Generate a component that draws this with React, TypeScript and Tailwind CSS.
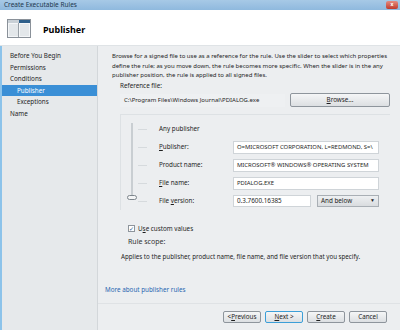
import React from "react";

const navItems = [
  { label: "Before You Begin", indent: false, active: false },
  { label: "Permissions", indent: false, active: false },
  { label: "Conditions", indent: false, active: false },
  { label: "Publisher", indent: true, active: true },
  { label: "Exceptions", indent: true, active: false },
  { label: "Name", indent: false, active: false },
];

const HeaderIcon = () => (
  <svg width="24" height="19" viewBox="0 0 24 19">
    <rect x="0.5" y="0.5" width="23" height="18" fill="#f4f6f8" stroke="#8a9199" />
    <rect x="1" y="1" width="22" height="3" fill="#c9d0d6" />
    <rect x="12" y="1" width="11" height="3" fill="#2e5f8a" />
    <line x1="11.5" y1="4" x2="11.5" y2="18" stroke="#9aa1a8" />
    <rect x="2" y="5" width="9" height="12" fill="#e3e7ea" />
    <rect x="13" y="5" width="9" height="12" fill="#e3e7ea" />
  </svg>
);

const Field = ({ u, rest, value }: { u: string; rest: string; value: string }) => (
  <div className="flex items-center h-[18px]">
    <div className="w-[9px] h-px bg-[#d6dadd] ml-[17px] mr-[12px]" />
    <span className="w-[74px]">
      <span className="underline">{u}</span>
      {rest}
    </span>
    <div className="w-[146px] h-[13px] bg-white border border-[#cfd4d8] px-[3px] flex items-center whitespace-nowrap overflow-hidden text-[5.9px]">
      {value}
    </div>
  </div>
);

const Btn = ({ u, pre, rest, primary }: { u: string; pre?: string; rest: string; primary?: boolean }) => (
  <div
    className={`w-[38px] h-[12px] flex items-center justify-center rounded-[2px] border bg-gradient-to-b from-[#f5f6f7] to-[#dcdfe2] ${
      primary ? "border-[#3c9fd8]" : "border-[#8e959c]"
    }`}
  >
    {pre}
    <span className="underline">{u}</span>
    {rest}
  </div>
);

export default function App() {
  return (
    <div
      className="w-[400px] h-[330px] flex flex-col overflow-hidden text-[6.3px] text-[#1e1e1e] bg-[#eceef0]"
      style={{ fontFamily: '"Noto Sans", "Open Sans", sans-serif' }}
    >
      {/* title bar */}
      <div className="h-[10px] flex items-center justify-between bg-gradient-to-b from-[#a7c9e6] to-[#8fb9de] pl-[4px] pr-[2px]">
        <span className="text-[6.5px] text-[#22384e]">Create Executable Rules</span>
        <div className="w-[12px] h-[8px] rounded-[2px] bg-gradient-to-b from-[#e48a80] to-[#c0392b] flex items-center justify-center text-white text-[5px] font-bold">
          x
        </div>
      </div>

      {/* header */}
      <div className="h-[36px] bg-white flex items-center pl-[7px] pt-[2px] border-b border-[#dfe3e6]">
        <HeaderIcon />
        <span className="ml-[12px] mt-[2px] text-[9px] font-bold text-black">Publisher</span>
      </div>

      <div className="flex flex-1">
        {/* left nav */}
        <div className="w-[98px] shrink-0 bg-[#e6e9eb] border-l-2 border-[#8cc3ea] border-r border-r-[#d3d7da] pt-[4px]">
          {navItems.map((n) => (
            <div
              key={n.label}
              className={`h-[11.5px] flex items-center ${n.indent ? "pl-[15px]" : "pl-[8px]"} ${
                n.active ? "bg-[#3a8fd6] text-white" : ""
              }`}
            >
              {n.label}
            </div>
          ))}
        </div>

        {/* main */}
        <div className="flex-1 min-w-0 flex flex-col">
          <div className="flex-1 pl-[14px] pt-[6px]">
            <p className="w-[282px] leading-[9.5px] text-[6px]">
              Browse for a signed file to use as a reference for the rule. Use the slider to select which properties
              define the rule; as you move down, the rule becomes more specific. When the slider is in the any
              publisher position, the rule is applied to all signed files.
            </p>
            <div className="pl-[8px] leading-[9.5px]">Reference file:</div>
            <div className="flex items-center mt-[3px] pl-[8px]">
              <div className="w-[165px] h-[13px] flex items-center px-[4px] bg-[#eef0f2] text-[6px]">
                C:\Program Files\Windows Journal\PDIALOG.exe
              </div>
              <div className="ml-[5px] w-[100px] h-[14px] flex items-center justify-center rounded-[2px] border border-[#8e959c] bg-gradient-to-b from-[#f5f6f7] to-[#dcdfe2]">
                <span className="underline">B</span>rowse...
              </div>
            </div>

            <div className="mt-[7px] ml-[8px] w-[270px] border-t border-l border-[#dde1e4] pt-[5px] relative">
              {/* slider track */}
              <div className="absolute left-[10px] top-[8px] w-[2px] h-[76px] bg-[#c9ced2]" />
              <div className="absolute left-[6px] top-[80px] w-[10px] h-[5px] rounded-[3px] border border-[#7d858c] bg-[#f3f4f5]" />
              <div className="flex items-center h-[18px]">
                <div className="w-[9px] h-px bg-[#d6dadd] ml-[17px] mr-[12px]" />
                <span>Any publisher</span>
              </div>
              <Field u="P" rest="ublisher:" value="O=MICROSOFT CORPORATION, L=REDMOND, S=\" />
              <Field u="" rest="Product name:" value="MICROSOFT® WINDOWS® OPERATING SYSTEM" />
              <Field u="F" rest="ile name:" value="PDIALOG.EXE" />
              <div className="flex items-center h-[18px]">
                <div className="w-[9px] h-px bg-[#d6dadd] ml-[17px] mr-[12px]" />
                <span className="w-[74px]">
                  File <span className="underline">v</span>ersion:
                </span>
                <div className="w-[78px] h-[12px] bg-white border border-[#cfd4d8] px-[3px] flex items-center">
                  0.3.7600.16385
                </div>
                <div className="ml-[6px] w-[62px] h-[12px] border border-[#a9afb5] bg-gradient-to-b from-[#eef0f2] to-[#d9dcdf] px-[3px] flex items-center justify-between">
                  <span>And below</span>
                  <span className="text-[5px]">▼</span>
                </div>
              </div>
            </div>

            <div className="flex items-center mt-[14px] pl-[16px]">
              <div className="w-[7px] h-[7px] border border-[#8e959c] bg-white flex items-center justify-center text-[6px] text-[#2b5c8e] leading-none">
                ✓
              </div>
              <span className="ml-[3px]">
                U<span className="underline">s</span>e custom values
              </span>
            </div>
            <div className="mt-[4px] pl-[16px] text-[7px] text-[#333]">Rule scope:</div>
            <div className="mt-[4px] pl-[9px] text-[6.2px]">
              Applies to the publisher, product name, file name, and file version that you specify.
            </div>
          </div>

          <div className="pl-[7px] pb-[9px] text-[#2a66b0]">More about publisher rules</div>
          <div className="h-[27px] border-t border-[#dfe2e5] flex items-center justify-end gap-[4px] pr-[13px]">
            <Btn pre="< " u="P" rest="revious" />
            <Btn u="N" rest="ext >" primary />
            <Btn u="C" rest="reate" />
            <Btn u="" rest="Cancel" />
          </div>
        </div>
      </div>
    </div>
  );
}
